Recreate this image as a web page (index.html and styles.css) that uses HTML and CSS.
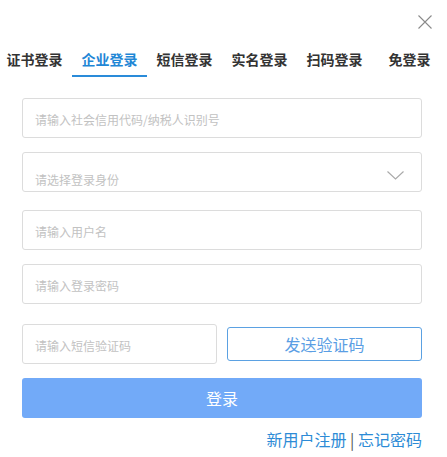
FILE: index.html
```html
<!DOCTYPE html>
<html lang="zh-CN">
<head>
<meta charset="utf-8">
<link rel="stylesheet" href="styles.css">
</head>
<body>
<div class="dialog">
  <div class="topbar">
    <button class="close" aria-label="关闭">
      <svg width="14" height="14" viewBox="0 0 14 14"><path d="M0.5 0.5L13.5 13.5M13.5 0.5L0.5 13.5" stroke="#8a8a8a" stroke-width="1.1" fill="none"/></svg>
    </button>
  </div>
  <nav class="tabs">
    <span class="tab">证书登录</span>
    <span class="tab active">企业登录</span>
    <span class="tab">短信登录</span>
    <span class="tab">实名登录</span>
    <span class="tab">扫码登录</span>
    <span class="tab">免登录</span>
  </nav>
  <form class="form">
    <input class="field f1" type="text" placeholder="请输入社会信用代码/纳税人识别号">
    <div class="field select f2">
      <span class="ph">请选择登录身份</span>
      <svg class="chev" width="17" height="9" viewBox="0 0 17 9"><path d="M0.5 0.5L8.5 8L16.5 0.5" stroke="#a9a9a9" stroke-width="1.1" fill="none"/></svg>
    </div>
    <input class="field f3" type="text" placeholder="请输入用户名">
    <input class="field f4" type="password" placeholder="请输入登录密码">
    <div class="smsrow">
      <input class="field sms" type="text" placeholder="请输入短信验证码">
      <button type="button" class="send">发送验证码</button>
    </div>
    <button type="button" class="login">登录</button>
    <div class="links"><a href="#">新用户注册</a> <span class="sep">|</span> <a href="#">忘记密码</a></div>
  </form>
</div>
</body>
</html>
```
FILE: styles.css
```css
html, body {
  margin: 0;
  padding: 0;
  background: #ffffff;
}
body {
  font-family: "Noto Sans CJK SC", "Noto Sans", sans-serif;
  width: 447px;
  overflow: hidden;
}
.dialog {
  width: 447px;
}
.topbar {
  display: flex;
  justify-content: flex-end;
  height: 46px;
}
.close {
  border: 0;
  background: none;
  padding: 0;
  margin: 15px 15px 0 0;
  width: 14px;
  height: 14px;
  display: block;
  line-height: 0;
}
.tabs {
  display: flex;
  margin-left: -3px;
}
.tab {
  flex: 0 0 75px;
  text-align: center;
  font-size: 14px;
  font-weight: bold;
  color: #333333;
  line-height: 26px;
  padding-bottom: 3px;
  border-bottom: 2px solid transparent;
}
.tab.active {
  color: #1f87d6;
  border-bottom-color: #2a8bd9;
}
.form {
  display: flex;
  flex-direction: column;
  padding: 21px 25px 0 22px;
}
.field {
  box-sizing: border-box;
  height: 40px;
  border: 1px solid #dcdcdc;
  border-radius: 3px;
  padding: 0 12px;
  font-family: "Noto Sans CJK SC", sans-serif;
  font-size: 12px;
  color: #333;
  outline: none;
  margin: 0;
}
.field::placeholder {
  color: #c2c2c2;
}
.f1 { padding-top: 3px; }
.f2 { margin-top: 14px; }
.f3 { margin-top: 18px; padding-top: 3px; }
.f4 { margin-top: 14px; padding-top: 3px; }
.select {
  display: flex;
  align-items: center;
  justify-content: space-between;
  padding: 16px 17px 0 12px;
}
.select .ph {
  color: #c2c2c2;
  line-height: 18px;
}
.chev {
  margin-top: -9px;
}
.smsrow {
  display: flex;
  align-items: center;
  gap: 10px;
  margin-top: 20px;
}
.sms {
  width: 195px;
  padding-top: 2px;
}
.send {
  flex: 1;
  height: 34px;
  border: 1px solid #5ba1e2;
  border-radius: 3px;
  background: #ffffff;
  color: #5a9ee4;
  font-family: "Noto Sans CJK SC", sans-serif;
  font-size: 16px;
  padding: 0;
}
.login {
  margin-top: 14px;
  height: 40px;
  border: 0;
  border-radius: 3px;
  background: #72aaf8;
  color: #ffffff;
  font-family: "Noto Sans CJK SC", sans-serif;
  font-size: 16px;
  padding: 0;
}
.links {
  margin-top: 9px;
  text-align: right;
  font-size: 16px;
  line-height: 24px;
  color: #2d8bd6;
}
.links a {
  color: #2d8bd6;
  text-decoration: none;
}
.links .sep {
  color: #555555;
}
```
